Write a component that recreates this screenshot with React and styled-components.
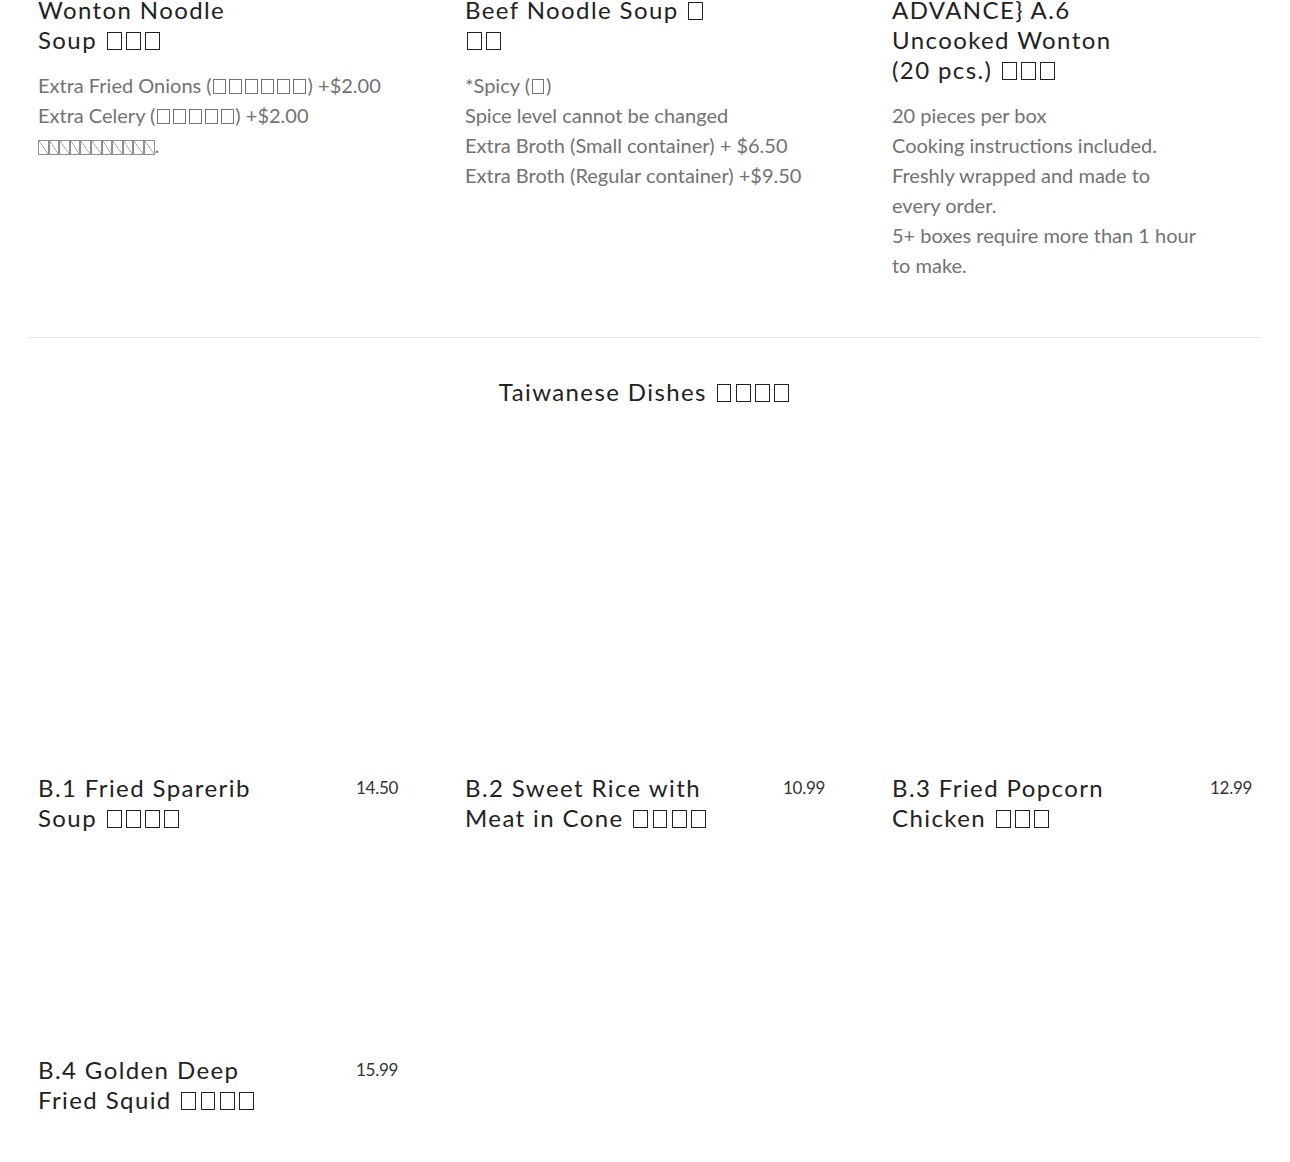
import React from "react";
import styled, { createGlobalStyle } from "styled-components";

const Global = createGlobalStyle`
  html, body { margin: 0; padding: 0; background: #fff; }
  body { font-family: "Lato", "Open Sans", sans-serif; }
`;

const Page = styled.div`
  padding: 0 29px 40px;
  height: 1162px;
  overflow: hidden;
  box-sizing: border-box;
`;

const Grid = styled.div`
  display: grid;
  grid-template-columns: repeat(3, 360px);
  column-gap: 67px;
  padding: 0 9px;
  margin-top: ${(p) => p.$top || 0}px;
`;

const Item = styled.div`
  display: flex;
  flex-direction: column;
`;

const ImageSlot = styled.div`
  height: 200px;
  margin-bottom: 22px;
`;

const Header = styled.div`
  display: flex;
  justify-content: space-between;
  align-items: flex-start;
`;

const Title = styled.h3`
  margin: 0;
  font-family: "Lato", "Open Sans", sans-serif;
  font-weight: 400;
  font-size: 24px;
  line-height: 30px;
  letter-spacing: 1.4px;
  color: #222;
`;

const Line = styled.span`
  display: block;
  white-space: nowrap;
`;

const Price = styled.div`
  font-family: "Lato", sans-serif;
  font-size: 17px;
  line-height: 30px;
  color: #333;
  letter-spacing: -0.3px;
`;

const Desc = styled.div`
  margin-top: 15px;
  font-family: "Lato", "Open Sans", sans-serif;
  font-size: 20px;
  line-height: 30px;
  color: #727272;
`;

const Tofu = styled.span`
  display: inline-block;
  box-sizing: border-box;
  width: ${(p) => (p.$small ? "10.6px" : "0.62em")};
  height: ${(p) => (p.$small ? "15px" : "0.78em")};
  margin: 0 ${(p) => (p.$small ? "0" : "0.09em")};
  border: 1px solid currentColor;
  vertical-align: ${(p) => (p.$small ? "-2px" : "-0.06em")};
  background: ${(p) =>
    p.$small
      ? "linear-gradient(to top right, transparent calc(50% - 0.6px), currentColor 50%, transparent calc(50% + 0.6px))"
      : "none"};
  opacity: ${(p) => (p.$small ? 0.8 : 1)};
`;

const Divider = styled.hr`
  margin: 57px 0 0;
  border: 0;
  border-top: 1px solid #e4e4e4;
`;

const SectionTitle = styled.h2`
  margin: 39px 0 144px;
  text-align: center;
  font-family: "Lato", "Open Sans", sans-serif;
  font-weight: 400;
  font-size: 24px;
  line-height: 30px;
  letter-spacing: 1.4px;
  color: #222;
`;

const T = ({ n, small }) => (
  <>
    {Array.from({ length: n }).map((_, i) => (
      <Tofu key={i} $small={small} />
    ))}
  </>
);

const topItems = [
  {
    title: ["Wonton Noodle", <>Soup <T n={3} /></>],
    desc: [
      <>Extra Fried Onions (<T n={6} />) +$2.00</>,
      <>Extra Celery (<T n={5} />) +$2.00</>,
      <><T n={11} small />.</>,
    ],
  },
  {
    title: [<>Beef Noodle Soup <T n={1} /></>, <T n={2} />],
    desc: [
      <>*Spicy (<T n={1} />)</>,
      "Spice level cannot be changed",
      "Extra Broth (Small container) + $6.50",
      "Extra Broth (Regular container) +$9.50",
    ],
  },
  {
    title: ["ADVANCE} A.6", "Uncooked Wonton", <>(20 pcs.) <T n={3} /></>],
    desc: [
      "20 pieces per box",
      "Cooking instructions included.",
      "Freshly wrapped and made to",
      "every order.",
      "5+ boxes require more than 1 hour",
      "to make.",
    ],
  },
];

const dishes = [
  { title: ["B.1 Fried Sparerib", <>Soup <T n={4} /></>], price: "14.50" },
  { title: ["B.2 Sweet Rice with", <>Meat in Cone <T n={4} /></>], price: "10.99" },
  { title: ["B.3 Fried Popcorn", <>Chicken <T n={3} /></>], price: "12.99" },
  { title: ["B.4 Golden Deep", <>Fried Squid <T n={4} /></>], price: "15.99" },
];

export default function App() {
  return (
    <>
      <Global />
      <Page>
        <Grid $top={-5}>
          {topItems.map((it, i) => (
            <Item key={i}>
              <Title>
                {it.title.map((l, j) => (
                  <Line key={j}>{l}</Line>
                ))}
              </Title>
              <Desc>
                {it.desc.map((l, j) => (
                  <Line key={j}>{l}</Line>
                ))}
              </Desc>
            </Item>
          ))}
        </Grid>
        <Divider />
        <SectionTitle>
          Taiwanese Dishes <T n={4} />
        </SectionTitle>
        <Grid>
          {dishes.map((d, i) => (
            <Item key={i}>
              <ImageSlot />
              <Header>
                <Title>
                  {d.title.map((l, j) => (
                    <Line key={j}>{l}</Line>
                  ))}
                </Title>
                <Price>{d.price}</Price>
              </Header>
            </Item>
          ))}
        </Grid>
      </Page>
    </>
  );
}
